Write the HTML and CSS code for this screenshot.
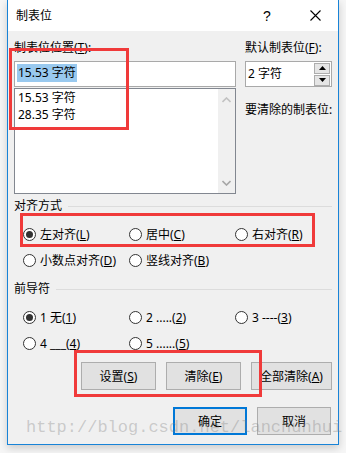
FILE: index.html
```html
<!DOCTYPE html>
<html lang="zh-CN">
<head>
<meta charset="utf-8">
<title>制表位</title>
<link rel="stylesheet" href="styles.css">
</head>
<body>
<div class="dialog">
  <div class="titlebar">
    <span class="title">制表位</span>
    <span class="tb-btn help">?</span>
    <span class="tb-btn close"><svg width="11" height="11" viewBox="0 0 11 11"><path d="M0.5 0.5 L10.5 10.5 M10.5 0.5 L0.5 10.5" stroke="#000" stroke-width="1.1" fill="none"/></svg></span>
  </div>
  <div class="body">
    <div class="top">
      <div class="col-left">
        <div class="label">制表位位置(<u>T</u>):</div>
        <div class="input"><span class="sel">15.53 字符</span></div>
        <div class="list">
          <div class="items">
            <div class="item">15.53 字符</div>
            <div class="item">28.35 字符</div>
          </div>
          <div class="scroll">
            <svg width="9" height="6" viewBox="0 0 9 6"><path d="M0.5 5 L4.5 1 L8.5 5" stroke="#c2c2c2" stroke-width="1.6" fill="none"/></svg>
            <svg width="9" height="6" viewBox="0 0 9 6"><path d="M0.5 1 L4.5 5 L8.5 1" stroke="#a6a6a6" stroke-width="1.6" fill="none"/></svg>
          </div>
        </div>
      </div>
      <div class="col-right">
        <div class="label">默认制表位(<u>F</u>):</div>
        <div class="spin">
          <span class="spin-text">2 字符</span>
          <div class="spin-btns">
            <span class="sb"><svg width="7" height="4" viewBox="0 0 7 4"><path d="M0 4 L3.5 0 L7 4 Z" fill="#000"/></svg></span>
            <span class="sb"><svg width="7" height="4" viewBox="0 0 7 4"><path d="M0 0 L3.5 4 L7 0 Z" fill="#000"/></svg></span>
          </div>
        </div>
        <div class="label clear-label">要清除的制表位:</div>
      </div>
    </div>

    <div class="group-head"><span>对齐方式</span><i class="rule"></i></div>
    <div class="radio-grid">
      <label class="radio"><span class="dot on"></span>左对齐(<u>L</u>)</label>
      <label class="radio"><span class="dot"></span>居中(<u>C</u>)</label>
      <label class="radio"><span class="dot"></span>右对齐(<u>R</u>)</label>
      <label class="radio"><span class="dot"></span>小数点对齐(<u>D</u>)</label>
      <label class="radio"><span class="dot"></span>竖线对齐(<u>B</u>)</label>
    </div>

    <div class="group-head head2"><span>前导符</span><i class="rule"></i></div>
    <div class="radio-grid">
      <label class="radio"><span class="dot on"></span>1 无(<u>1</u>)</label>
      <label class="radio"><span class="dot"></span>2 .....(<u>2</u>)</label>
      <label class="radio"><span class="dot"></span>3 ----(<u>3</u>)</label>
      <label class="radio"><span class="dot"></span>4 ___(<u>4</u>)</label>
      <label class="radio"><span class="dot"></span>5 ......(<u>5</u>)</label>
    </div>

    <div class="btn-row">
      <span class="btn b-set">设置(<u>S</u>)</span>
      <span class="btn b-clr">清除(<u>E</u>)</span>
      <span class="btn b-all">全部清除(<u>A</u>)</span>
    </div>
    <div class="btn-row bottom">
      <span class="btn ok">确定</span>
      <span class="btn cancel">取消</span>
    </div>
  </div>

  <div class="mark r1"></div>
  <div class="mark r2"></div>
  <div class="mark r3"></div>
  <div class="watermark">http://blog.csdn.net/lanchunhui</div>
</div>
</body>
</html>
```
FILE: styles.css
```css
* { box-sizing: border-box; }
html, body { margin: 0; padding: 0; }
body {
  background: #f6f6f6;
  width: 346px;
  height: 453px;
  overflow: hidden;
  font-family: "Noto Sans", "Noto Sans CJK SC", sans-serif;
  font-size: 12px;
  color: #000;
}
u { text-decoration: underline; text-underline-offset: 1px; }

.dialog {
  position: relative;
  margin-left: 7px;
  width: 332px;
  height: 445px;
  background: #f0f0f0;
  border: 1px solid #1883d7;
  border-top: none;
  box-shadow: 0 3px 8px rgba(0,0,0,0.18);
}

.titlebar {
  height: 31px;
  background: #fff;
  display: flex;
  align-items: center;
  padding-left: 8px;
}
.title { flex: 1; font-size: 12px; line-height: 16px; padding-top: 1px; }
.tb-btn {
  width: 46px;
  height: 31px;
  display: flex;
  align-items: center;
  justify-content: center;
}
.help { font-size: 14px; font-family: "Liberation Sans", sans-serif; padding-right: 4px; }
.close { padding-bottom: 1px; }

.body { padding: 0 6px; }

.top {
  display: grid;
  grid-template-columns: 222px 87px;
  column-gap: 9px;
  padding-top: 9px;
}
.label { line-height: 16px; height: 16px; white-space: nowrap; }
.col-left .label, .col-right .label { margin-bottom: 5px; }

.input {
  height: 26px;
  background: #fff;
  border: 1px solid #a9a9a9;
  padding: 2px 2px;
  display: flex;
  align-items: flex-start;
}
.sel {
  background: #99c9ef;
  line-height: 18px;
  padding: 0 1px;
}

.list {
  margin-top: 1px;
  height: 106px;
  background: #fff;
  border: 1px solid #828790;
  display: flex;
}
.items { flex: 1; padding: 1px 0 0 3px; }
.item { line-height: 16.5px; }
.scroll {
  width: 17px;
  background: #f0f0f0;
  display: flex;
  flex-direction: column;
  justify-content: space-between;
  align-items: center;
  padding: 8px 0 7px;
}

.spin {
  height: 26px;
  background: #fff;
  border: 1px solid #a9a9a9;
  display: flex;
  align-items: center;
  padding-left: 2px;
}
.spin-text { flex: 1; line-height: 16px; }
.spin-btns {
  width: 16px;
  display: flex;
  flex-direction: column;
  gap: 1px;
  margin-right: 1px;
}
.sb {
  height: 11px;
  background: #e5e5e5;
  border: 1px solid #adadad;
  display: flex;
  align-items: center;
  justify-content: center;
}
.clear-label { margin-top: 15px; }

.group-head {
  margin-top: 5px;
  height: 14px;
  display: flex;
  align-items: center;
  line-height: 14px;
}
.group-head .rule {
  flex: 1;
  height: 1px;
  background: #dcdcdc;
  margin-left: 6px;
  margin-top: 1px;
}
.head2 { margin-top: 9px; }

.radio-grid {
  margin-top: 8px;
  padding-left: 9px;
  display: grid;
  grid-template-columns: 106px 106px 1fr;
  grid-auto-rows: 26px;
}
.radio {
  display: flex;
  align-items: center;
  white-space: nowrap;
}
.dot {
  width: 13px;
  height: 13px;
  border: 1px solid #333;
  border-radius: 50%;
  background: #fff;
  margin-right: 4px;
  display: flex;
  align-items: center;
  justify-content: center;
}
.dot.on::after {
  content: "";
  width: 7px;
  height: 7px;
  border-radius: 50%;
  background: #333;
}

.btn-row {
  display: flex;
  justify-content: flex-end;
  gap: 10px;
  margin-top: 6px;
}
.btn {
  height: 28px;
  background: #e1e1e1;
  border: 1px solid #adadad;
  display: flex;
  align-items: center;
  justify-content: center;
  white-space: nowrap;
}
.b-set, .b-clr { width: 75px; }
.b-all { width: 81px; }
.bottom { margin-top: 17px; margin-right: 1px; }
.ok { width: 74px; border: 2px solid #0078d7; }
.cancel { width: 74px; }

.mark {
  position: absolute;
  border: 3px solid #f03a3a;
}
.r1 { left: 1px; top: 48px; width: 120px; height: 82px; }
.r2 { left: 12px; top: 213px; width: 295px; height: 34px; }
.r3 { left: 66px; top: 350px; width: 188px; height: 47px; }

.watermark {
  position: absolute;
  left: 18px;
  top: 418px;
  font-family: "Liberation Mono", monospace;
  font-size: 17px;
  line-height: 20px;
  color: rgba(130,130,130,0.36);
  white-space: nowrap;
  pointer-events: none;
}
```
